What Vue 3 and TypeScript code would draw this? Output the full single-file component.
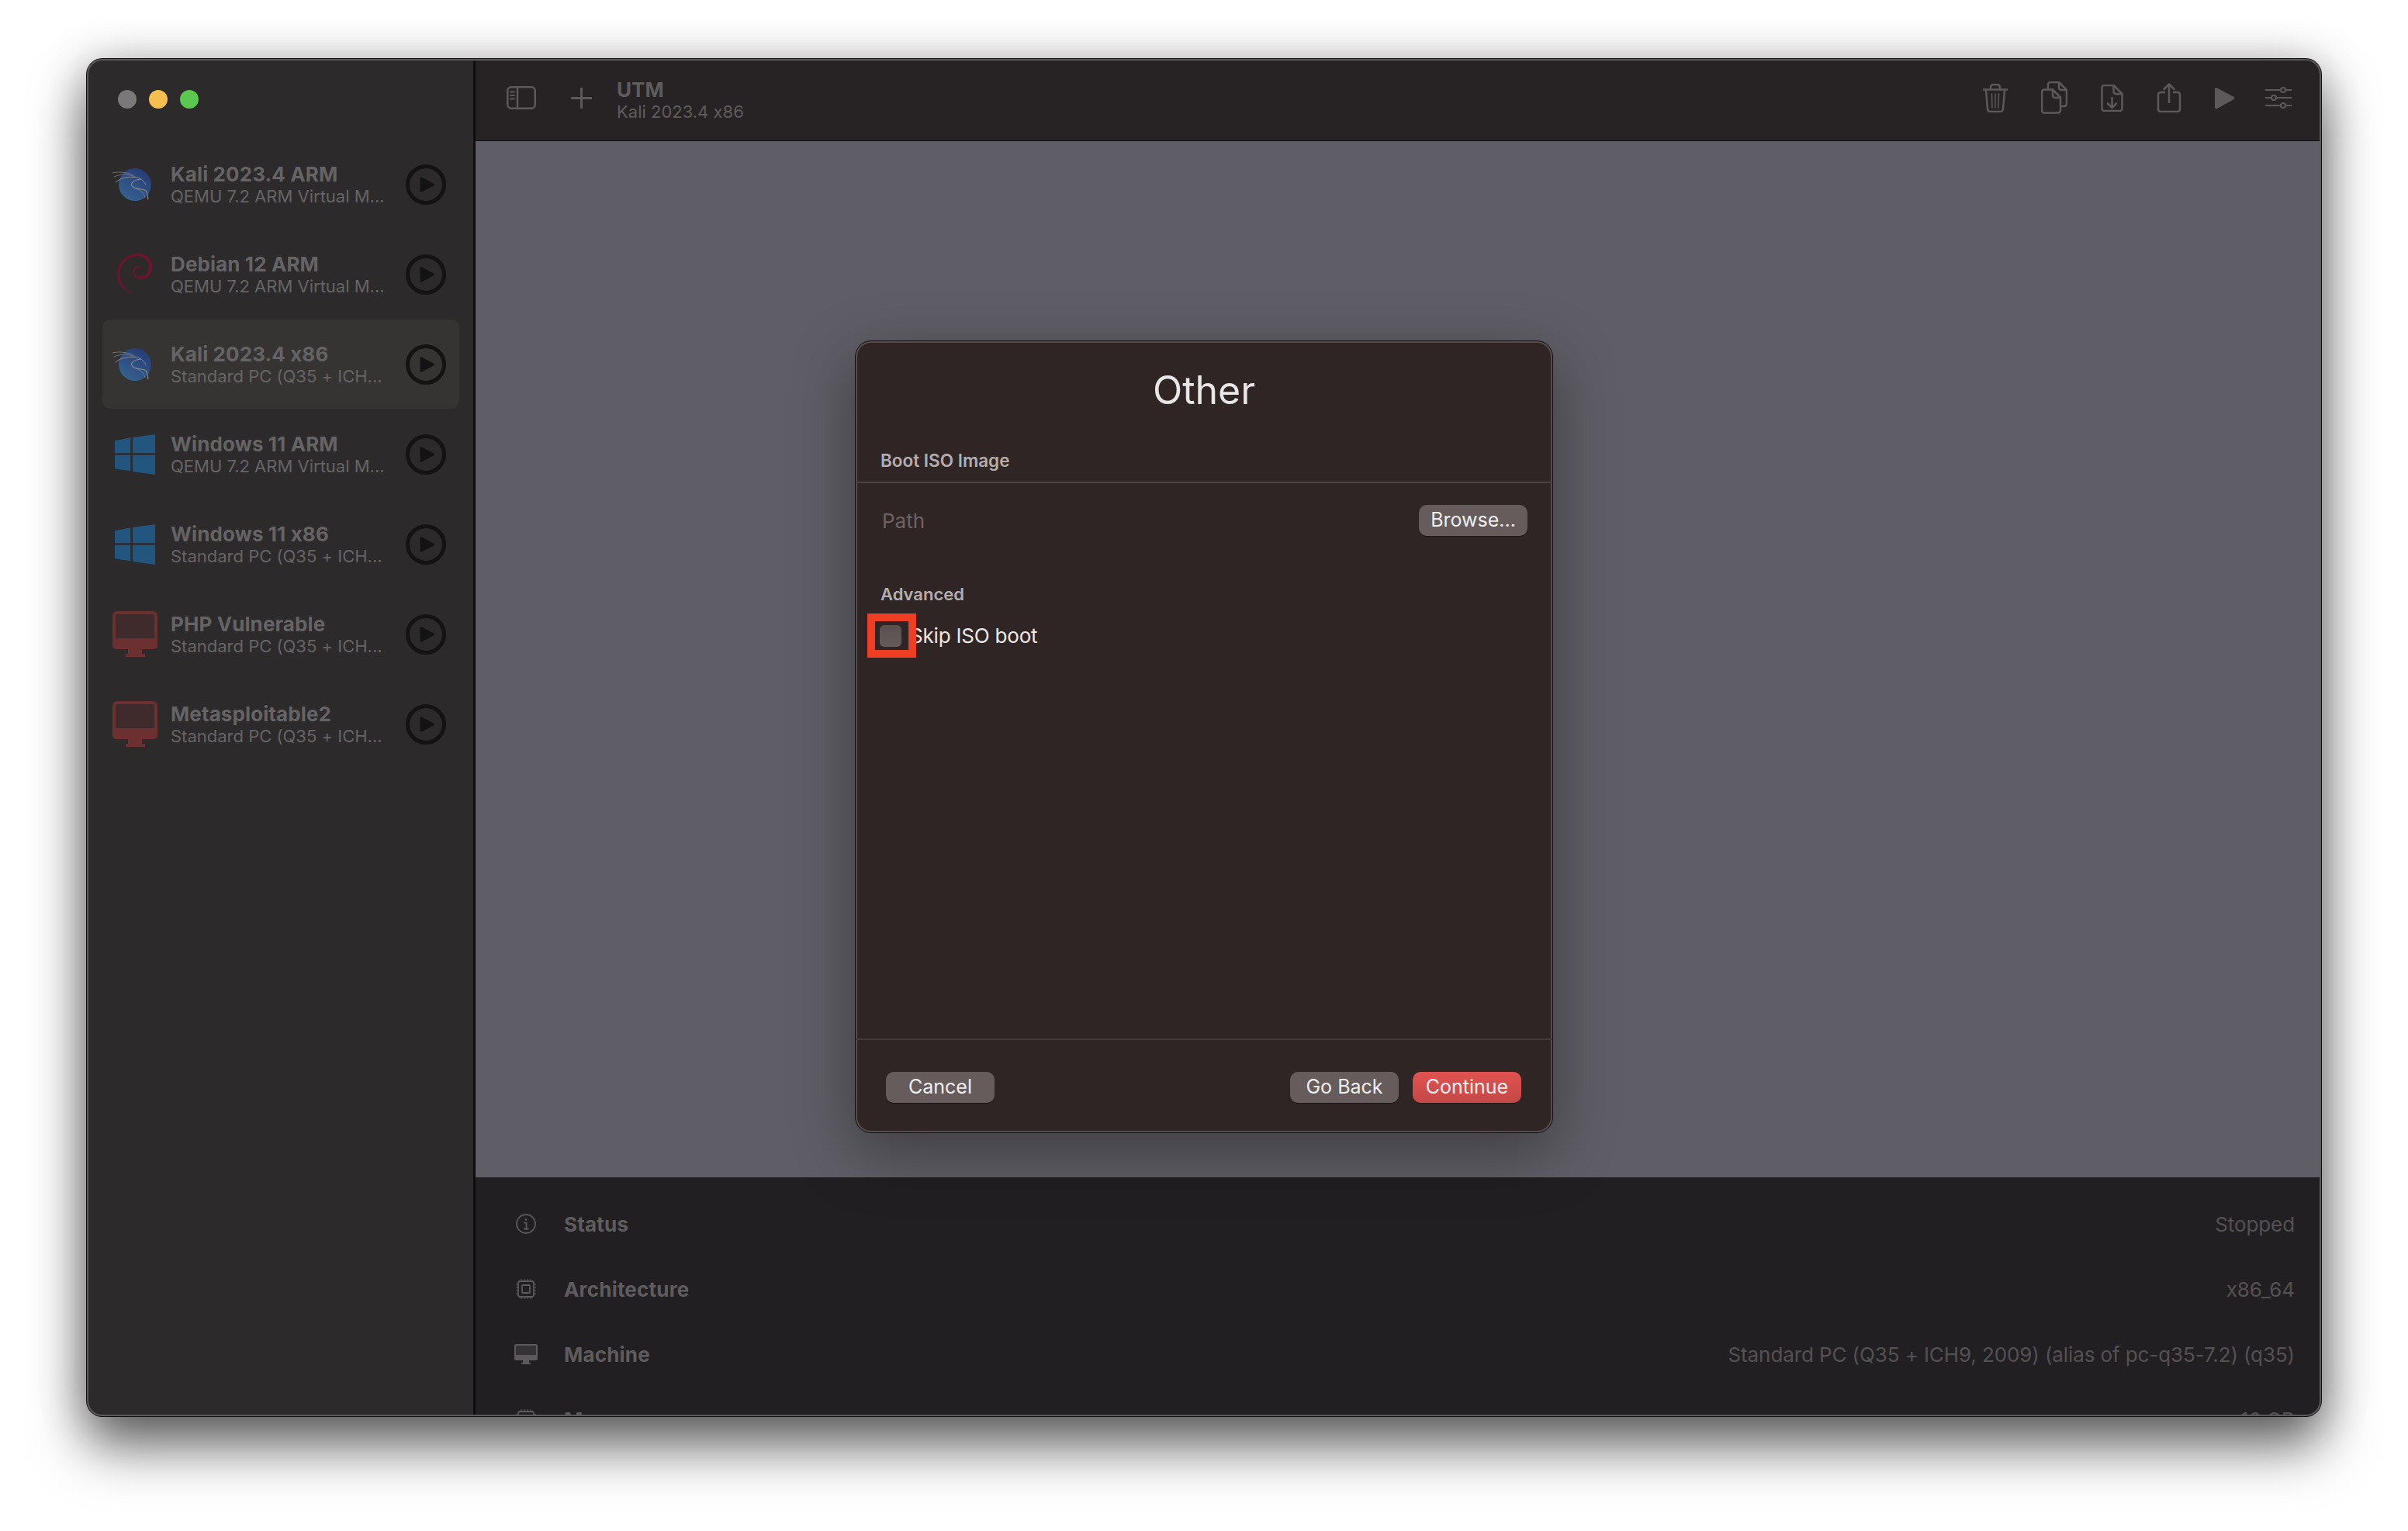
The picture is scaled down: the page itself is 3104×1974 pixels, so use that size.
<template>
  <div class="page">
    <div class="window">
      <aside class="sidebar">
        <div class="lights">
          <span class="light grey"></span>
          <span class="light yellow"></span>
          <span class="light green"></span>
        </div>
        <ul class="vm-list">
          <li v-for="vm in vms" :key="vm.name" class="vm" :class="{ selected: vm.selected }">
            <div class="vm-icon">
              <svg v-if="vm.icon === 'kali'" width="60" height="60" viewBox="0 0 60 60" fill="none">
                <defs>
                  <linearGradient id="kaliBlue" x1="0.8" y1="0" x2="0.2" y2="1">
                    <stop offset="0" stop-color="#273976" />
                    <stop offset="1" stop-color="#356590" />
                  </linearGradient>
                </defs>
                <circle cx="30" cy="30" r="21" fill="url(#kaliBlue)" />
                <g stroke="#8a8986" stroke-width="0.7" stroke-linecap="round">
                  <path d="M1 15C10 13 20 14 28 18" />
                  <path d="M3 20C12 16 22 16 30 20" />
                  <path d="M5 27C12 21 24 18 36 22C40 24 42 27 44 30" stroke-width="1" />
                  <path d="M38 23C27 24 22 30 28 33C32 37 40 35 44 38C47 41 46 44 47 49" stroke-width="1.200" />
                  <path d="M32 35C38 38 42 41 43 47" />
                </g>
              </svg>
              <svg v-else-if="vm.icon === 'debian'" width="60" height="60" viewBox="0 0 60 60" fill="none">
                <path d="M30 57C13 51 6.500 40 7 29C8 13 20 2.500 34 2.500C46 2.500 53.500 12 52.500 22C51 31.500 43 37.500 35 35.500C28.500 34 25 29 27 24C29 19 35 18 39 21C35 20.500 30.500 22 29.500 26C28.500 30.500 33 33 38 32C45 30 48.500 25 47.500 18C46 9.500 38 5.500 31 6.500C20 8 10.500 17 10.500 30C10.500 41 18 51 30 57Z" fill="#66172d" />
              </svg>
              <svg v-else-if="vm.icon === 'windows'" width="52" height="52" viewBox="0 0 52 52" fill="#23567f">
                <path d="M0 8.300L20.300 4.300V24.300H0Z" />
                <path d="M23 4L52 0V24.300H23Z" />
                <path d="M0 26.700H20.300V47.300L0 44.300Z" />
                <path d="M23 26.700H52V52L23 48Z" />
              </svg>
              <svg v-else width="58" height="59" viewBox="0 0 58 59">
                <rect x="2" y="2" width="54" height="45" rx="4" fill="#3f2b2c" stroke="#6c3030" stroke-width="4" />
                <rect x="0" y="35" width="58" height="14" rx="5" fill="#6c3030" />
                <path d="M20 48H38V55H42V59H17V55H20Z" fill="#6c3030" />
              </svg>
            </div>
            <div class="vm-text">
              <div class="vm-name">{{ vm.name }}</div>
              <div class="vm-desc">{{ vm.desc }}</div>
            </div>
            <svg class="vm-play" width="52" height="52" viewBox="0 0 52 52">
              <circle cx="26" cy="26" r="23.500" fill="none" stroke="#131313" stroke-width="5" />
              <path d="M18.500 17.500Q18.500 15.500 20.500 16.500L36 24.800Q37.500 26 36 27.200L20.500 35.500Q18.500 36.500 18.500 34.500Z" fill="#131313" />
            </svg>
          </li>
        </ul>
      </aside>

      <main class="content">
        <header class="toolbar">
          <svg class="tool" width="38" height="30" viewBox="0 0 38 30">
            <rect x="1.250" y="1.250" width="35.500" height="27.500" rx="5" />
            <path d="M14 1.500V28.500" />
            <path d="M5 7.500H10M5 12H10M5 16.500H10" stroke-width="1.800" />
          </svg>
          <svg class="tool plus" width="27" height="27" viewBox="0 0 27 27">
            <path d="M13.500 1V26M1 13.500H26" />
          </svg>
          <div class="app-title">
            <div class="app-name">UTM</div>
            <div class="app-sub">Kali 2023.4 x86</div>
          </div>
          <div class="tools">
            <svg class="tool" width="32" height="37" viewBox="0 0 32 37">
              <path d="M0.500 7.500H31.500" />
              <path d="M10 7V4.500A3.500 3.500 0 0 1 13.500 1H18.500A3.500 3.500 0 0 1 22 4.500V7" />
              <path d="M4 8L6 32.500A3.500 3.500 0 0 0 9.500 36H22.500A3.500 3.500 0 0 0 26 32.500L28 8" />
              <path d="M11.500 13L12 31M16 13V31M20.500 13L20 31" stroke-width="1.500" />
            </svg>
            <svg class="tool" width="34" height="42" viewBox="0 0 34 42">
              <path d="M4 10.500H15L25 20.500V37.500A3 3 0 0 1 22 40.500H4A3 3 0 0 1 1 37.500V13.500A3 3 0 0 1 4 10.500Z" />
              <path d="M15 10.500V18A3 3 0 0 0 18 21H25" />
              <path d="M9 9V4A3 3 0 0 1 12 1H23L33 11V29A3 3 0 0 1 30 32H26" />
              <path d="M23 1V8A3 3 0 0 0 26 11H33" />
            </svg>
            <svg class="tool" width="29" height="35" viewBox="0 0 29 35">
              <path d="M4.500 1H16.500L27.500 12V31A3 3 0 0 1 24.500 34H4.500A3 3 0 0 1 1.500 31V4A3 3 0 0 1 4.500 1Z" />
              <path d="M16.500 1V9A3 3 0 0 0 19.500 12H27.500" />
              <path d="M14.500 17V30M9 24.500L14.500 30L20 24.500" />
            </svg>
            <svg class="tool" width="32" height="38" viewBox="0 0 32 38">
              <path d="M10 12H5A3 3 0 0 0 2 15V34A3 3 0 0 0 5 37H27A3 3 0 0 0 30 34V15A3 3 0 0 0 27 12H22" />
              <path d="M16 25V2M9.500 8L16 1.500L22.500 8" />
            </svg>
            <svg width="26" height="29" viewBox="0 0 26 29">
              <path d="M0 3Q0 0 3 1.500L24.500 13Q26 14.500 24.500 16L3 28Q0 29.500 0 26Z" fill="#5d595a" />
            </svg>
            <svg class="tool sliders" width="34" height="28" viewBox="0 0 34 28">
              <path d="M0 4H34M0 14H34M0 24H34" stroke-width="2.200" />
              <circle cx="23" cy="4" r="3" fill="#272324" stroke-width="2" />
              <circle cx="11" cy="14" r="3" fill="#272324" stroke-width="2" />
              <circle cx="23" cy="24" r="3" fill="#272324" stroke-width="2" />
            </svg>
          </div>
        </header>

        <div class="stage"></div>

        <section class="details">
          <div v-for="row in details" :key="row.label" class="detail">
            <div class="detail-icon">
              <svg v-if="row.icon === 'info'" width="26" height="26" viewBox="0 0 26 26" fill="none" stroke="#5d595a">
                <circle cx="13" cy="13" r="12" stroke-width="1.800" />
                <path d="M10.500 11.500H13.500V19M10 19.500H16.500" stroke-width="1.800" />
                <circle cx="13" cy="7.500" r="1.300" fill="#5d595a" stroke="none" />
              </svg>
              <svg v-else-if="row.icon === 'chip'" width="26" height="26" viewBox="0 0 26 26" fill="none" stroke="#5d595a">
                <rect x="3" y="3" width="20" height="20" rx="2.500" stroke-width="1.800" />
                <rect x="8" y="8" width="10" height="10" rx="1" stroke-width="1.800" />
                <path d="M7 0V2.500M11 0V2.500M15 0V2.500M19 0V2.500M7 23.500V26M11 23.500V26M15 23.500V26M19 23.500V26M0 7H2.500M0 11H2.500M0 15H2.500M0 19H2.500M23.500 7H26M23.500 11H26M23.500 15H26M23.500 19H26" stroke-width="1.200" />
              </svg>
              <svg v-else width="30" height="26" viewBox="0 0 30 26">
                <rect x="1" y="1" width="28" height="16" rx="1.500" fill="#363334" stroke="#5d595a" stroke-width="2" />
                <rect x="0" y="14" width="30" height="7" rx="2" fill="#5d595a" />
                <path d="M11 20H19V24H21V26H9V24H11Z" fill="#5d595a" />
              </svg>
            </div>
            <div class="detail-label">{{ row.label }}</div>
            <div class="detail-value">{{ row.value }}</div>
          </div>
        </section>
      </main>

      <div class="dialog">
        <h1 class="dialog-title">Other</h1>
        <div class="section-title">Boot ISO Image</div>
        <div class="path-row">
          <span class="path-label">Path</span>
          <button class="btn" type="button">Browse...</button>
        </div>
        <div class="section-title advanced">Advanced</div>
        <label class="check-row">
          <span class="check"></span>
          <span class="check-text">Skip ISO boot</span>
          <span class="highlight"></span>
        </label>
        <footer class="dialog-footer">
          <button class="btn" type="button">Cancel</button>
          <div class="footer-right">
            <button class="btn" type="button">Go Back</button>
            <button class="btn primary" type="button">Continue</button>
          </div>
        </footer>
      </div>
    </div>
  </div>
</template>

<script setup lang="ts">
interface Vm {
  name: string
  desc: string
  icon: 'kali' | 'debian' | 'windows' | 'monitor'
  selected?: boolean
}

const arm = 'QEMU 7.2 ARM Virtual M...'
const pc = 'Standard PC (Q35 + ICH...'

const vms: Vm[] = [
  { name: 'Kali 2023.4 ARM', desc: arm, icon: 'kali' },
  { name: 'Debian 12 ARM', desc: arm, icon: 'debian' },
  { name: 'Kali 2023.4 x86', desc: pc, icon: 'kali', selected: true },
  { name: 'Windows 11 ARM', desc: arm, icon: 'windows' },
  { name: 'Windows 11 x86', desc: pc, icon: 'windows' },
  { name: 'PHP Vulnerable', desc: pc, icon: 'monitor' },
  { name: 'Metasploitable2', desc: pc, icon: 'monitor' },
]

const details = [
  { label: 'Status', value: 'Stopped', icon: 'info' },
  { label: 'Architecture', value: 'x86_64', icon: 'chip' },
  { label: 'Machine', value: 'Standard PC (Q35 + ICH9, 2009) (alias of pc-q35-7.2) (q35)', icon: 'monitor' },
  { label: 'Memory', value: '16 GB', icon: 'chip' },
]
</script>

<style>
html,
body {
  background: #fff;
}
</style>

<style scoped>
.page {
  width: 3104px;
  height: 1974px;
  padding: 76px 0 0 112px;
  box-sizing: border-box;
  overflow: hidden;
  font-family: Inter, "Liberation Sans", sans-serif;
  font-feature-settings: "calt" 0;
}

.window {
  position: relative;
  display: grid;
  grid-template-columns: 501px 1fr;
  width: 2880px;
  height: 1750px;
  border-radius: 20px;
  background: #2c2a2b;
  overflow: hidden;
}

.page::before {
  content: "";
  position: absolute;
  left: 112px;
  top: 76px;
  width: 2880px;
  height: 1750px;
  border-radius: 20px;
  box-shadow: 0 0 0 1px #0c0c0c, 0 40px 70px rgba(0, 0, 0, 0.55), 0 6px 60px rgba(0, 0, 0, 0.3);
}

.window::after {
  content: "";
  position: absolute;
  inset: 0;
  border-radius: 20px;
  box-shadow: inset 0 0 0 2px #5b595a;
  pointer-events: none;
}

.sidebar {
  background: #2c2a2b;
  border-right: 3px solid #0e0e0e;
  box-sizing: border-box;
}

.lights {
  display: flex;
  gap: 16px;
  height: 104px;
  padding: 40px 0 0 40px;
  box-sizing: border-box;
}

.light {
  width: 24px;
  height: 24px;
  border-radius: 50%;
}

.grey {
  background: #7a7878;
}

.yellow {
  background: #f5bf4f;
}

.green {
  background: #5bc850;
}

.vm-list {
  list-style: none;
  margin: 0;
  padding: 0 18px 0 20px;
  display: flex;
  flex-direction: column;
  gap: 1px;
}

.vm {
  display: flex;
  align-items: center;
  height: 115px;
  border-radius: 10px;
}

.vm.selected {
  background: #353433;
}

.vm-icon {
  width: 84px;
  flex: none;
  display: flex;
  justify-content: center;
  align-items: center;
  margin-right: 4px;
}

.vm-text {
  flex: 1;
  min-width: 0;
}

.vm-name {
  font-size: 26px;
  line-height: 30px;
  font-weight: 700;
  letter-spacing: 0.1px;
  color: #656363;
}

.vm-desc {
  font-size: 22px;
  line-height: 26px;
  color: #666464;
}

.vm-play {
  flex: none;
  margin-right: 17px;
}

.content {
  display: grid;
  grid-template-rows: 106px 1fr 308px;
  min-width: 0;
}

.toolbar {
  display: flex;
  align-items: center;
  padding: 0 38px 5px 40px;
  background: #272324;
  border-bottom: 1px solid #0e0e0e;
  box-sizing: border-box;
}

.tool {
  fill: none;
  stroke: #5d595a;
  stroke-width: 2.500;
  stroke-linecap: round;
  stroke-linejoin: round;
}

.plus {
  margin: 0 32px 0 45px;
  stroke-width: 3;
}

.app-title {
  margin-top: 5px;
}

.app-name {
  font-size: 26px;
  line-height: 30px;
  font-weight: 700;
  color: #5f5c5d;
}

.app-sub {
  font-size: 22px;
  line-height: 26px;
  color: #5f5c5d;
}

.tools {
  margin-left: auto;
  display: flex;
  align-items: center;
  gap: 43px;
}

.sliders {
  margin-left: -4px;
}

.stage {
  background: #5f5d65;
}

.details {
  background: #221f22;
  padding: 18px 34px 0 48px;
  overflow: hidden;
}

.detail {
  display: flex;
  align-items: center;
  height: 84px;
  flex: none;
}

.detail-icon {
  width: 34px;
  display: flex;
  justify-content: center;
  margin-right: 32px;
}

.detail-label {
  font-size: 26px;
  font-weight: 700;
  letter-spacing: 0.2px;
  color: #5f5c5d;
}

.detail-value {
  margin-left: auto;
  font-size: 26px;
  letter-spacing: -0.1px;
  color: #545152;
}

.dialog {
  position: absolute;
  top: 364px;
  left: 991px;
  width: 898px;
  height: 1020px;
  display: flex;
  flex-direction: column;
  box-sizing: border-box;
  border-radius: 20px;
  background: #302525;
  box-shadow: 0 0 0 1px #111, inset 0 0 0 2px #564c4c, 0 24px 80px rgba(0, 0, 0, 0.35);
}

.dialog-title {
  margin: 31px 0 0;
  font-size: 50px;
  line-height: 64px;
  font-weight: 400;
  text-align: center;
  color: #e8e6e6;
}

.section-title {
  padding: 0 32px;
  font-size: 22.500px;
  line-height: 28px;
  font-weight: 600;
  color: #b3aeae;
}

.dialog-title + .section-title {
  margin-top: 45px;
  padding-bottom: 13px;
  border-bottom: 2px solid #4d4343;
}

.path-row {
  display: flex;
  align-items: center;
  justify-content: space-between;
  height: 40px;
  margin-top: 28px;
  padding: 0 32px 0 34px;
}

.path-label {
  font-size: 26px;
  color: #6d6363;
}

.btn {
  width: 140px;
  height: 40px;
  padding: 0 0 3px;
  border: none;
  border-radius: 10px;
  background: #665c5c;
  color: #f0eeee;
  font-family: inherit;
  font-feature-settings: inherit;
  font-size: 25px;
  box-shadow: 0 1px 1px rgba(0, 0, 0, 0.35);
}

.advanced {
  margin-top: 61px;
  font-size: 22px;
}

.check-row {
  position: relative;
  display: flex;
  align-items: center;
  height: 28px;
  margin: 26px 0 0 31px;
}

.check {
  width: 28px;
  height: 28px;
  border-radius: 6px;
  background: linear-gradient(#5a5050, #655b5b);
}

.check-text {
  margin: -2px 0 0 11px;
  font-size: 26px;
  letter-spacing: -0.2px;
  color: #ebe9e9;
}

.highlight {
  position: absolute;
  left: -16px;
  top: -15px;
  width: 63px;
  height: 57px;
  box-sizing: border-box;
  border: 10px solid #ee3f24;
}

.dialog-footer {
  margin-top: auto;
  height: 121px;
  display: flex;
  justify-content: space-between;
  align-items: flex-start;
  padding: 41px 40px 0 39px;
  border-top: 2px solid #453a3b;
  box-sizing: border-box;
}

.footer-right {
  display: flex;
  gap: 18px;
}

.primary {
  background: linear-gradient(#e0524f, #c34947);
}
</style>
